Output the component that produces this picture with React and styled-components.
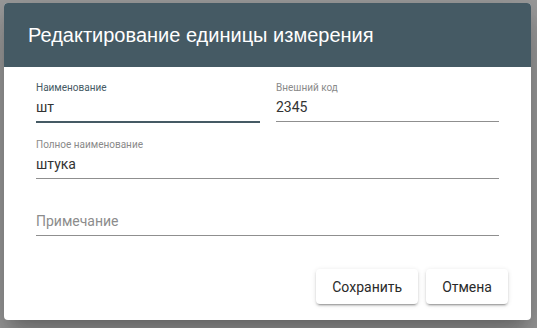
import React from "react";
import styled, { createGlobalStyle } from "styled-components";

const Global = createGlobalStyle`
  html, body { margin: 0; padding: 0; }
  body {
    background: #9c9c9c;
    font-family: Roboto, "Liberation Sans", Arial, sans-serif;
    width: 537px;
    height: 328px;
    overflow: hidden;
  }
`;

const Backdrop = styled.div`
  padding: 3px 6px 8px 4px;
`;

const Dialog = styled.div`
  width: 527px;
  height: 317px;
  background: #fff;
  border-radius: 4px;
  overflow: hidden;
  box-shadow: 0 11px 15px -7px rgba(0,0,0,.2), 0 24px 38px 3px rgba(0,0,0,.14), 0 9px 46px 8px rgba(0,0,0,.12);
  display: flex;
  flex-direction: column;
`;

const Header = styled.div`
  height: 64px;
  background: #455a64;
  display: flex;
  align-items: center;
  padding-left: 24px;
  box-sizing: border-box;
`;

const Title = styled.h2`
  margin: 0;
  font-size: 20px;
  font-weight: 400;
  color: #fff;
  font-family: "Liberation Sans", Arial, sans-serif;
`;

const Body = styled.div`
  padding: 0 32px;
  display: grid;
  grid-template-columns: 224px 223px;
  column-gap: 16px;
`;

const Field = styled.div`
  grid-column: ${p => (p.$wide ? "1 / -1" : "auto")};
  height: ${p => p.$h || 57}px;
  display: flex;
  flex-direction: column;
  justify-content: flex-end;
`;

const Label = styled.div`
  font-size: 10px;
  color: ${p => (p.$focused ? "#455a64" : "#8a8a8a")};
  line-height: 12px;
  margin-bottom: 4px;
`;

const Value = styled.div`
  font-size: 14px;
  color: ${p => (p.$placeholder ? "#8c8c8c" : "#333")};
  line-height: 18px;
  padding-bottom: 5px;
  border-bottom: ${p => (p.$focused ? "2px solid #455a64" : "1px solid #8f8f8f")};
  margin-bottom: ${p => (p.$focused ? "0" : "1px")};
`;

const Actions = styled.div`
  margin-top: auto;
  display: flex;
  justify-content: flex-end;
  gap: 8px;
  padding: 0 23px 16px 0;
`;

const Button = styled.button`
  height: 35px;
  padding: 0 16px;
  border: none;
  background: #fff;
  border-radius: 4px;
  font-family: Roboto, "Liberation Sans", Arial, sans-serif;
  font-size: 14px;
  color: #2a2a2a;
  box-shadow: 0 3px 1px -2px rgba(0,0,0,.2), 0 2px 2px 0 rgba(0,0,0,.14), 0 1px 5px 0 rgba(0,0,0,.12);
`;

export default function App() {
  return (
    <>
      <Global />
      <Backdrop>
        <Dialog>
          <Header>
            <Title>Редактирование единицы измерения</Title>
          </Header>
          <Body>
            <Field $h={56}>
              <Label $focused>Наименование</Label>
              <Value $focused>шт</Value>
            </Field>
            <Field $h={56}>
              <Label>Внешний код</Label>
              <Value>2345</Value>
            </Field>
            <Field $wide $h={57}>
              <Label>Полное наименование</Label>
              <Value>штука</Value>
            </Field>
            <Field $wide $h={57}>
              <Value $placeholder>Примечание</Value>
            </Field>
          </Body>
          <Actions>
            <Button>Сохранить</Button>
            <Button>Отмена</Button>
          </Actions>
        </Dialog>
      </Backdrop>
    </>
  );
}
